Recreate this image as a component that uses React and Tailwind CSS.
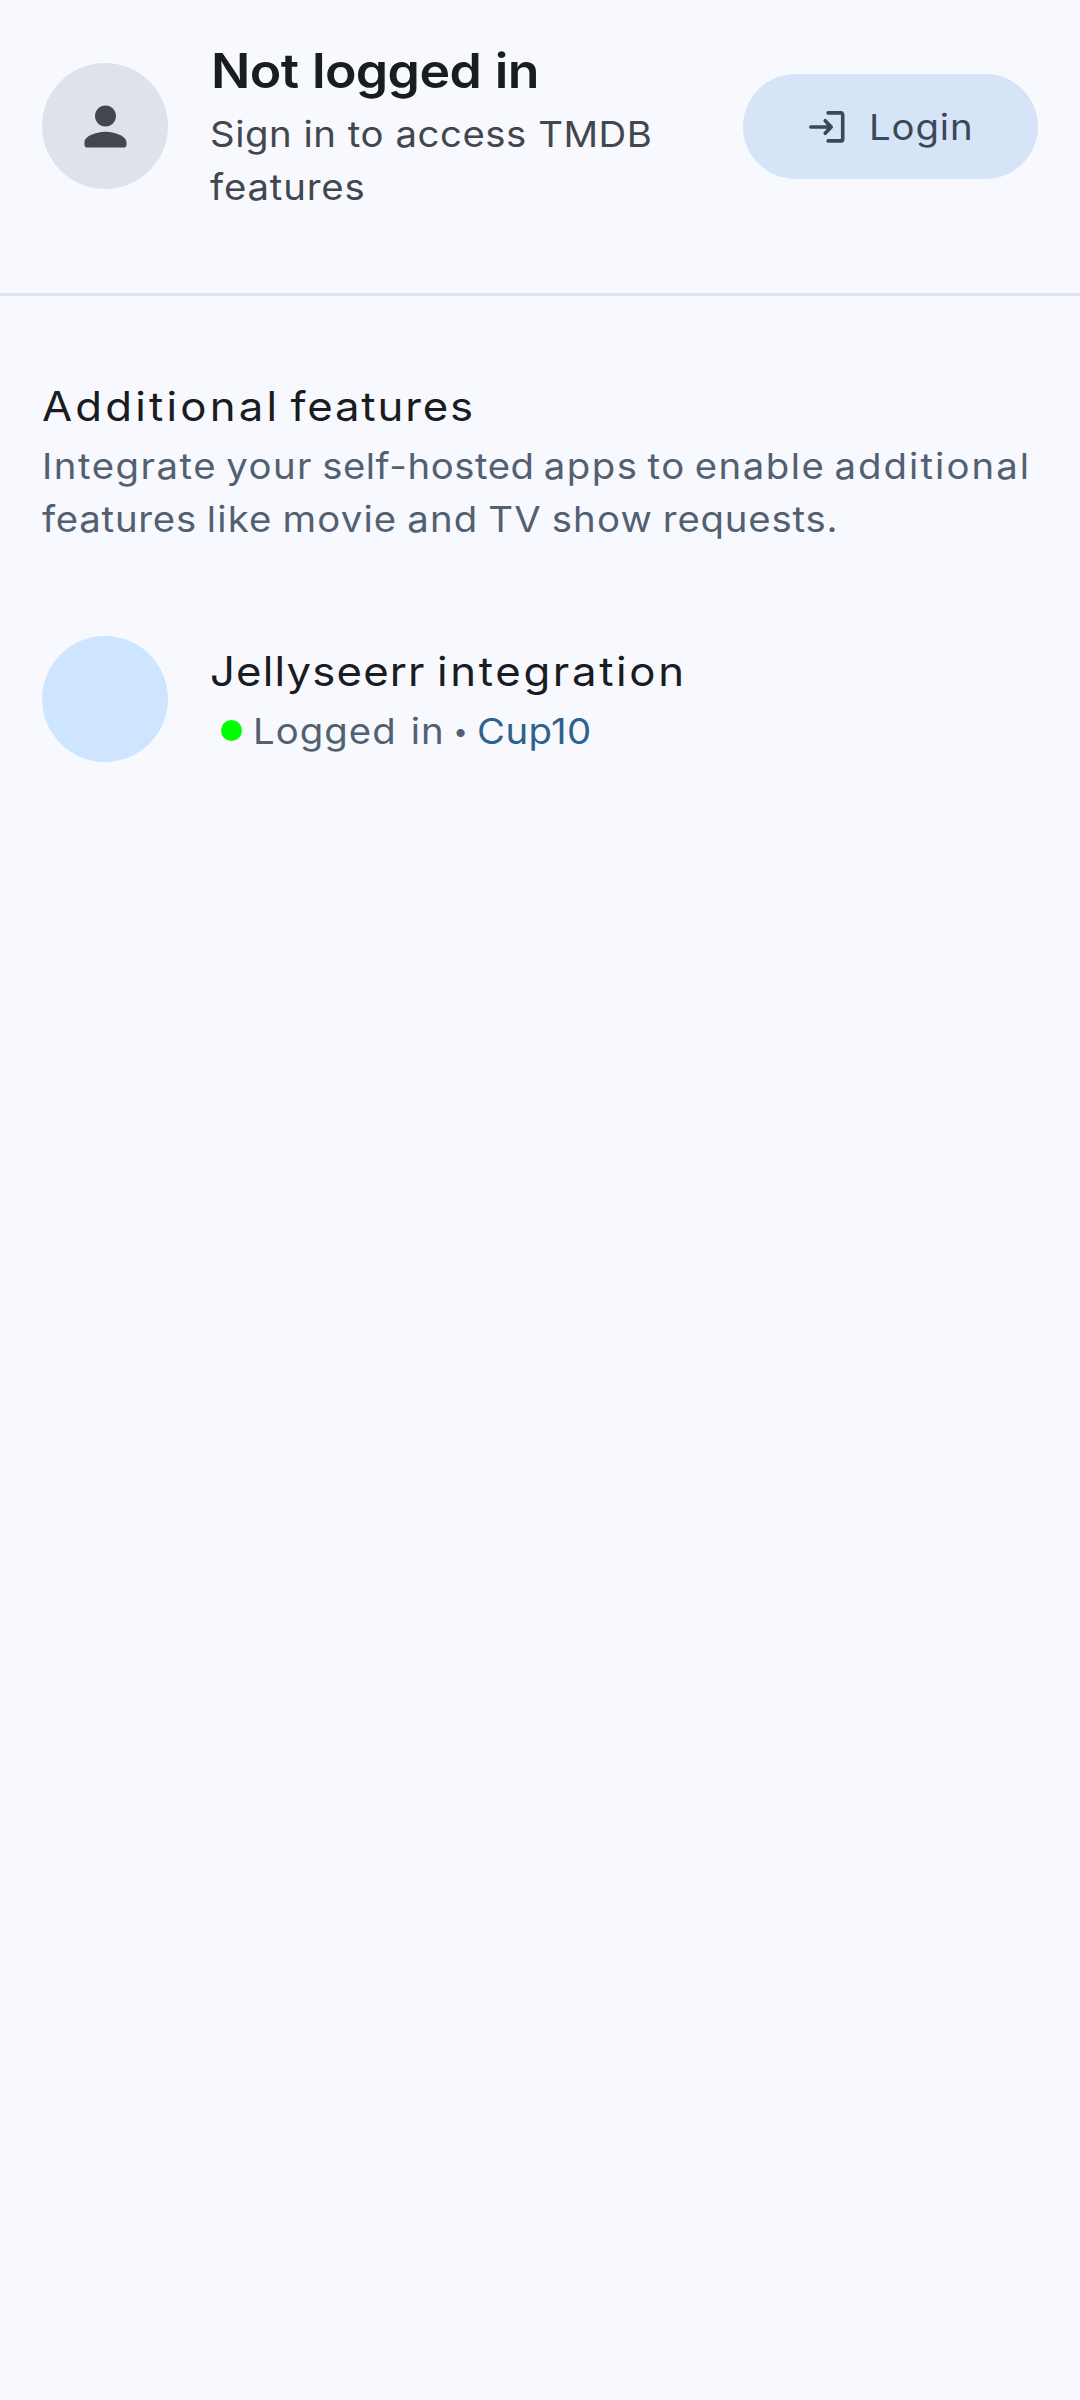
function PersonIcon() {
  return (
    <svg className="size-[63px]" viewBox="0 0 24 24" fill="currentColor" aria-hidden="true">
      <path d="M12 12c2.21 0 4-1.79 4-4s-1.79-4-4-4-4 1.79-4 4 1.79 4 4 4zm0 2c-2.67 0-8 1.34-8 4v1c0 .55.45 1 1 1h14c.55 0 1-.45 1-1v-1c0-2.66-5.33-4-8-4z" />
    </svg>
  );
}

function LoginIcon() {
  return (
    <svg className="h-8 w-9 shrink-0" viewBox="0 0 36 32" fill="none" stroke="currentColor" strokeWidth="3.6" strokeLinecap="round" strokeLinejoin="round" aria-hidden="true">
      <path d="M19.1 1.9H32a1.7 1.7 0 0 1 1.7 1.7V28.2a1.7 1.7 0 0 1-1.7 1.7H19.1" />
      <path d="M1.8 16H21M16.2 9.7l6 6.3-6 6.3" />
      <path d="M17.6 12.6v6.8l3.4-3.4z" fill="currentColor" stroke="none" />
    </svg>
  );
}

function Header() {
  return (
    <header className="flex h-[296px] items-start border-b-[3px] border-[#dee3eb] px-[42px]">
      <div className="mt-[63px] flex size-[126px] shrink-0 items-center justify-center rounded-full bg-[#dee3eb] text-[#42474e]">
        <PersonIcon />
      </div>
      <div className="ml-[42px] mt-[34px] w-[490px] shrink-0 whitespace-nowrap">
        <h1 className="origin-left scale-x-108 pl-px text-[48px] font-semibold leading-[73px] tracking-[-0.58px] text-[#191c20] [word-spacing:1px]">Not logged in</h1>
        <p className="mt-px origin-left scale-x-108 text-[35.5px] leading-[53px] text-[#42474e]">
          <span className="block tracking-[0.5px]">Sign in to access TMDB</span>
          <span className="block tracking-[0.76px]">features</span>
        </p>
      </div>
      <button className="ml-auto mt-[74px] flex h-[105px] w-[295px] items-center rounded-full bg-[#d5e4f7] pl-[66px] text-[#3a4857]">
        <LoginIcon />
        <span className="ml-6 origin-left scale-x-108 pt-0.5 text-[35.5px] leading-[53px] tracking-[0.8px]">Login</span>
      </button>
    </header>
  );
}

function Integration() {
  return (
    <section className="mt-[90px] flex">
      <div className="size-[126px] shrink-0 rounded-full bg-[#cee5ff]" />
      <div className="ml-[42px] mt-1">
        <h2 className="origin-left scale-x-108 whitespace-nowrap text-[40.5px] leading-[64px] text-[#191c20] [word-spacing:-2px]">
          <span className="tracking-[1.07px]">Jellyseerr </span>
          <span className="tracking-[2.44px]">integration</span>
        </h2>
        <p className="flex h-[53px] items-center whitespace-nowrap text-[35.5px] leading-[53px] text-[#526070]">
          <span className="ml-[11px] size-[21px] rounded-full bg-[#00ff00]" />
          <span className="ml-[10.5px] w-[193px] origin-left scale-x-108 pt-0.5 tracking-[0.95px] [word-spacing:2px]">Logged in</span>
          <span className="w-[30px] pt-0.5 text-center text-[26px]">•</span>
          <span className="ml-[1.5px] origin-left scale-x-108 pt-0.5 tracking-[0.35px] text-[#2e628c]">Cup10</span>
        </p>
      </div>
    </section>
  );
}

export default function App() {
  return (
    <div className="min-h-[2400px] w-[1080px] bg-[#f8f9ff] font-['Inter',sans-serif]">
      <Header />
      <main className="px-[42px] pt-[79px]">
        <h2 className="origin-left scale-x-108 whitespace-nowrap text-[40.5px] leading-[64px] text-[#191c20] [word-spacing:-5px]">
          <span className="tracking-[2.95px]">Additional </span>
          <span className="tracking-[1.7px]">features</span>
        </h2>
        <p className="mt-px w-[900px] origin-left scale-x-108 whitespace-nowrap text-[35.5px] leading-[53px] text-[#526070]">
          <span className="block tracking-[1.4px] [word-spacing:-3px]">
            Integrate your <span className="tracking-[0.5px]">self-hosted</span> apps to enable <span className="tracking-[1.9px]">additional</span>
          </span>
          <span className="block tracking-[1.1px] [word-spacing:-2px]">
            <span className="tracking-[0.7px]">features</span> like movie and TV show <span className="tracking-[0.75px]">requests.</span>
          </span>
        </p>
        <Integration />
      </main>
    </div>
  );
}
